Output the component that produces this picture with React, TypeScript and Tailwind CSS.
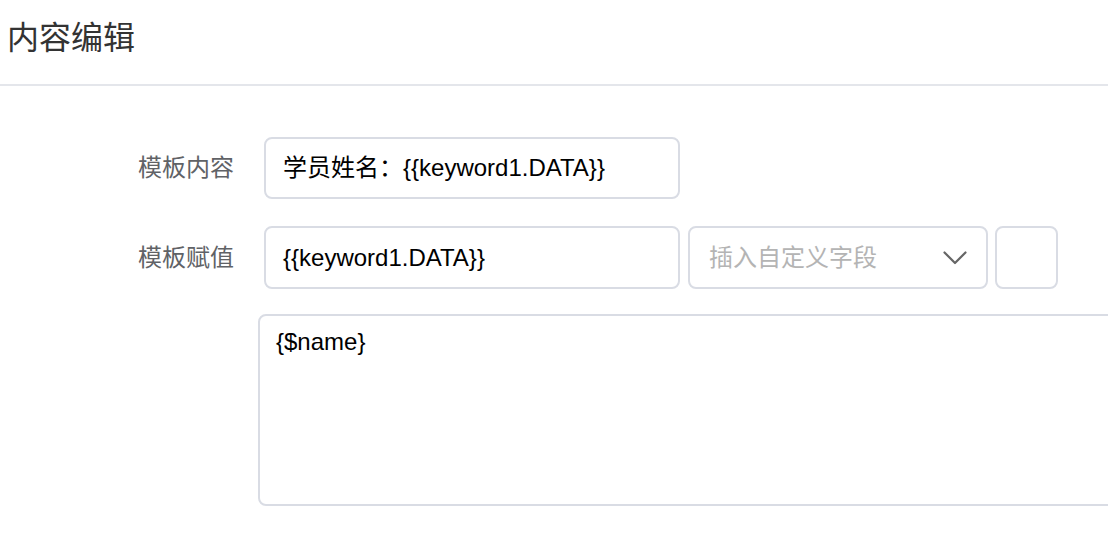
import React from "react";

const font = { fontFamily: '"Liberation Sans", "Noto Sans CJK SC", sans-serif' };

export default function App() {
  return (
    <div className="w-full h-[536px] overflow-hidden bg-white" style={font}>
      <div className="h-[84px] flex items-center pl-[7px] pb-[8px] text-[32px] text-[#333333]">
        内容编辑
      </div>
      <div className="h-[2px] bg-[#e4e6eb]" />
      <div className="pt-[51px] flex flex-col">
        <div className="flex items-center h-[62px]">
          <div className="w-[264px] pr-[30px] text-right text-[24px] text-[#606266]">模板内容</div>
          <div className="w-[416px] h-[62px] border-2 border-[#d9dce4] rounded-[8px] flex items-center pl-[17px] text-[24px] text-black">
            学员姓名：{"{{keyword1.DATA}}"}
          </div>
        </div>
        <div className="flex items-center h-[63px] mt-[27px]">
          <div className="w-[264px] pr-[30px] text-right text-[24px] text-[#606266]">模板赋值</div>
          <div className="w-[416px] h-[63px] border-2 border-[#d9dce4] rounded-[8px] flex items-center pl-[17px] text-[24px] text-black">
            {"{{keyword1.DATA}}"}
          </div>
          <div className="ml-[8px] w-[300px] h-[63px] border-2 border-[#d9dce4] rounded-[8px] flex items-center justify-between pl-[19px] pr-[19px] text-[24px] text-[#b4b4b4]">
            <span>插入自定义字段</span>
            <svg width="24" height="14" viewBox="0 0 24 14" fill="none">
              <path d="M1.5 1.5 L12 12 L22.5 1.5" stroke="#666666" strokeWidth="2.2" strokeLinecap="round" strokeLinejoin="round" />
            </svg>
          </div>
          <div className="ml-[7px] w-[63px] h-[63px] border-2 border-[#d9dce4] rounded-[8px]" />
        </div>
        <div className="mt-[25px] ml-[258px] w-[900px] h-[192px] shrink-0 border-2 border-[#d9dce4] rounded-[8px] pt-[8px] pl-[16px] text-[24px] leading-[36px] text-black">
          {"{$name}"}
        </div>
      </div>
    </div>
  );
}
